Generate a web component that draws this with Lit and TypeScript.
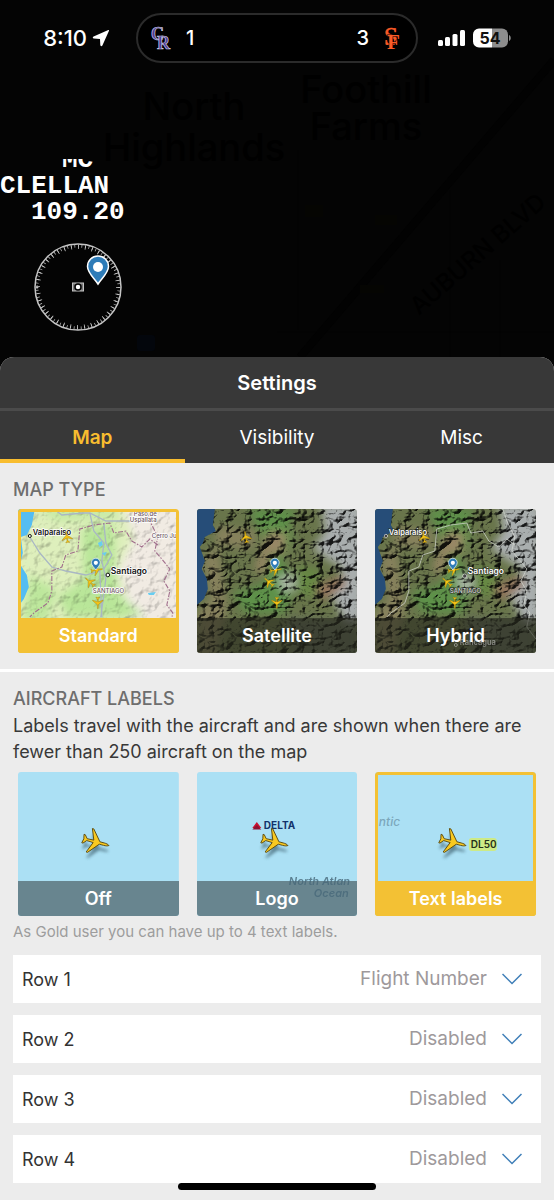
import { LitElement, html, svg, css, nothing } from "lit";
import { customElement, property, state } from "lit/decorators.js";
import { classMap } from "lit/directives/class-map.js";

const PLANE =
  "M0-14C0.900-13 1.300-11 1.300-8.500V-4L12.500 5.500V7L1.300 2.500L1 9.500L4.500 12.500V13.800L0 12.800L-4.500 13.800V12.500L-1 9.500L-1.300 2.500L-12.500 7V5.500L-1.300-4V-8.500C-1.300-11-0.900-13 0-14Z";

const plane = (x: number, y: number, heading: number, size: number) => svg`
  <path d=${PLANE} transform="translate(${x} ${y}) rotate(${heading}) scale(${size})"
    fill="#f9c920" stroke="#5a4a10" stroke-width="0.900"/>`;

const dot = (x: number, y: number, heading: number) => svg`
  <path d=${PLANE} transform="translate(${x} ${y}) rotate(${heading}) scale(0.420)"
    fill="#f7c414" stroke="#8a6c0c" stroke-width="0.800"/>`;

const pin = (x: number, y: number, size: number) => svg`
  <g transform="translate(${x} ${y}) scale(${size})">
    <path d="M0 0C-3-5-10.500-11-10.500-17.500A10.500 10.500 0 0 1 10.500-17.500C10.500-11 3-5 0 0Z"
      fill="#2e7cb8" stroke="#fff" stroke-width="1.500"/>
    <circle cx="0" cy="-17" r="5" fill="#fff"/>
  </g>`;

const traffic = svg`
  ${dot(49, 28, -10)}
  ${dot(79, 61, 80)}
  ${dot(72, 73, -48)}
  ${dot(80, 94, 180)}
  ${pin(78, 61, 0.42)}`;

const BORDER =
  "M161 130L152 118L155 104L149 96L152 82L146 72L152 60L144 50L137 42L140 28L132 12L128 0M140 36L132 30L124 38L114 32L108 22L96 24L92 14L76 16L62 20L60 42L48 46L44 58L34 62L34 82L30 94L16 104L12 108";

const standardMap = svg`
  <defs>
    <filter id="paper" x="0" y="0" width="100%" height="100%" color-interpolation-filters="sRGB">
      <feTurbulence type="fractalNoise" baseFrequency="0.110" numOctaves="3" seed="7"/>
      <feDiffuseLighting surfaceScale="1.100" diffuseConstant="1.220" lighting-color="#fff" result="l">
        <feDistantLight azimuth="225" elevation="55"/>
      </feDiffuseLighting>
      <feComposite in="l" in2="SourceGraphic" operator="arithmetic" k1="1" k2="0" k3="0" k4="0"/>
    </filter>
    <filter id="soften"><feGaussianBlur stdDeviation="4"/></filter>
  </defs>
  <g filter="url(#paper)">
    <rect width="161" height="144" fill="#deefbc"/>
    <g filter="url(#soften)">
      <path d="M104-5L116 30L100 60L112 100L108 150H170V-5Z" fill="#f1ebe3"/>
      <path d="M64 20L96 14L98 60L100 84L128 108H50L40 88L66 70Z" fill="#b9e699"/>
      <path d="M12 66L38 80L30 112H5Z" fill="#bde79c"/>
      <path d="M20 0H100V8L40 12Z" fill="#c3e9a2"/>
    </g>
  </g>
  <path d="M0 0H17L14 16L9 26L3 28L5 44L2 55L9 66L11 78L6 90L0 98Z" fill="#55bdf2"/>
  <g fill="none" stroke="#a9b7c4" stroke-width="1.300">
    <path d="M12 28L22 44L34 58L48 62L68 66L82 62L84 108M72 4L76 22L86 34L84 52L88 70L83 108M86 14L88 34L94 46L86 60M36 0L44 6L66 4L72 4L88 12L128 12"/>
  </g>
  <path d=${BORDER} fill="none" stroke="#a06e8c" stroke-width="1.100" stroke-dasharray="5 1.500 1.500 1.500"/>
  <path d="M80 34l4-2 1 4-3 2zM84 44l5-1-2 4zM130 84l8-1-2 3h-5z" fill="#69cdf0"/>
  <circle cx="12" cy="27" r="1.500" fill="#fff" stroke="#111"/>
  <circle cx="90" cy="66" r="1.800" fill="#fff" stroke="#111"/>
  <g font-weight="600" fill="#111" stroke="#fff" stroke-width="1.500" paint-order="stroke">
    <text x="15" y="26" font-size="7.500">Valparaiso</text>
    <text x="93" y="65" font-size="8.500">Santiago</text>
    <g font-weight="500" font-size="6" fill="#6b5560">
      <text x="75" y="84">SANTIAGO</text>
      <text x="116" y="7">Paso de</text>
      <text x="112" y="13">Uspallata</text>
      <text x="134" y="29">Cerro Ju</text>
    </g>
  </g>
  ${traffic}`;

const terrain = (id: string, labelled: boolean) => svg`
  <defs>
    <filter id="relief-${id}" x="0" y="0" width="100%" height="100%" color-interpolation-filters="sRGB">
      <feTurbulence type="turbulence" baseFrequency="0.055 0.080" numOctaves="5" seed="21"/>
      <feDiffuseLighting surfaceScale="8" diffuseConstant="1.550" lighting-color="#fff" result="l">
        <feDistantLight azimuth="215" elevation="52"/>
      </feDiffuseLighting>
      <feComposite in="l" in2="SourceGraphic" operator="arithmetic" k1="0.950" k2="0" k3="0.150" k4="0"/>
    </filter>
    <filter id="blend-${id}" x="-20%" y="-20%" width="140%" height="140%"><feGaussianBlur stdDeviation="4"/></filter>
    <filter id="edge-${id}"><feGaussianBlur stdDeviation="0.600"/></filter>
  </defs>
  <g filter="url(#relief-${id})">
    <rect width="161" height="144" fill="#5f6a44"/>
    <g filter="url(#blend-${id})">
      <path d="M18 18L60 22L55 40L20 36L6 50L14 90L0 105V150H18L30 100Z" fill="#7c7655"/>
      <path d="M52 0H100L92 14L96 30L84 52L100 72L88 104L48 104L36 84L66 76L76 50L66 28Z" fill="#558443"/>
      <path d="M72 22L90 24L86 46L72 44L68 66L58 60Z" fill="#8a7a5c"/>
      <path d="M100 56L124 62L118 88L98 84Z" fill="#5d7b3d"/>
      <path d="M124-5H166V112L148 112L136 90L146 60L116 40L128 22Z" fill="#9a9e9e"/>
      <path d="M118 78L146 66L150 76L126 92Z" fill="#876b54"/>
      <path d="M80 68L98 64L100 80L86 84Z" fill="#9aa694"/>
      <path d="M90 108L161 112V150H96Z" fill="#586050"/>
    </g>
  </g>
  <path d="M0 0H18L16 16L19 22L8 28L6 34L3 38L8 52L5 60L10 70L11 80L7 90L0 96Z" fill="#264e78" filter="url(#edge-${id})"/>
  ${labelled
    ? svg`
      <path d=${BORDER} fill="none" stroke="#d5d9d2" stroke-width="0.900" opacity="0.800"/>
      <g fill="#fff" font-weight="600" stroke="#2a2f26" stroke-width="1" paint-order="stroke">
        <circle cx="11" cy="27" r="1.500" fill="#444" stroke="#fff"/>
        <circle cx="90" cy="67" r="1.800" fill="#444" stroke="#fff"/>
        <text x="14" y="26" font-size="7.500">Valparaiso</text>
        <text x="93" y="65" font-size="8.500">Santiago</text>
        <text x="75" y="84" font-size="6" font-weight="500" fill="#dcdcdc">SANTIAGO</text>
      </g>`
    : nothing}
  ${traffic}`;

const ocean = (kind: string) => svg`
  <defs>
    <filter id="shade-${kind}" x="-30%" y="-30%" width="160%" height="160%"><feGaussianBlur stdDeviation="1.500"/></filter>
  </defs>
  <rect width="161" height="144" fill="#abe0f4"/>
  ${kind === "logo"
    ? svg`
      <path d="M60 50L64.500 56H55.500Z" fill="#c8102e"/>
      <path d="M60 53L64.500 57.500H55.500Z" fill="#8e1230"/>
      <text x="67" y="57" font-size="10" font-weight="700" fill="#12336b">DELTA</text>`
    : nothing}
  <path d=${PLANE} transform="translate(78 76) rotate(105) scale(0.950)" fill="#23404d" opacity="0.550" filter="url(#shade-${kind})"/>
  ${plane(78, 70, 105, 0.97)}
  ${kind === "text"
    ? svg`
      <text x="4" y="54" font-size="12" font-style="italic" font-weight="500" fill="#7ba7bb">ntic</text>
      <rect x="94" y="66" width="28" height="13" rx="3" fill="#cdea86"/>
      <text x="96" y="76" font-size="10" font-weight="600" fill="#26301a">DL50</text>`
    : nothing}`;

const overlays: Record<string, unknown> = {
  logo: svg`
    <g font-size="11" font-style="italic" font-weight="600" fill="#48697a" opacity="0.800">
      <text x="92" y="113">North Atlan</text>
      <text x="117" y="125">Ocean</text>
    </g>`,
  hybrid: svg`
    <g opacity="0.500">
      <circle cx="81" cy="136" r="1.500" fill="none" stroke="#ddd"/>
      <text x="85" y="136" font-size="7.500" font-weight="600" fill="#ddd">Rancagua</text>
    </g>`,
};

@customElement("option-card")
class OptionCard extends LitElement {
  @property() name = "";
  @property() label = "";
  @property() art = "";
  @property({ type: Boolean }) checked = false;

  static styles = css`
    :host { display: block; }
    .card {
      position: relative;
      display: grid;
      grid-template-rows: 109px 35px;
      border-radius: 3px;
      overflow: hidden;
      cursor: pointer;
    }
    .picture { grid-area: 1 / 1 / 3 / 2; display: block; width: 100%; height: 144px; }
    .radio { position: absolute; opacity: 0; margin: 0; }
    .caption {
      grid-area: 2 / 1;
      display: flex;
      align-items: center;
      justify-content: center;
      background: rgba(40, 42, 30, 0.62);
      color: #fff;
      font-size: 18px;
      line-height: 24px;
      font-weight: 600;
      z-index: 1;
    }
    .water .caption { background: #68858f; }
    .overlay { z-index: 2; pointer-events: none; }
    .on::after {
      content: "";
      grid-area: 1 / 1 / 3 / 2;
      border: 3px solid #f3c134;
      border-radius: 3px;
      z-index: 2;
      pointer-events: none;
    }
    .on .caption, .water.on .caption { background: #f3c134; }
  `;

  private drawing() {
    switch (this.art) {
      case "standard": return standardMap;
      case "satellite": return terrain("satellite", false);
      case "hybrid": return terrain("hybrid", true);
      default: return ocean(this.art);
    }
  }

  render() {
    const water = ["off", "logo", "text"].includes(this.art);
    const overlay = overlays[this.art];
    return html`
      <label class=${classMap({ card: true, water, on: this.checked })}>
        <input class="radio" type="radio" name=${this.name} .checked=${this.checked}
          @change=${() => this.dispatchEvent(new CustomEvent("pick", { detail: this.label }))} />
        <svg class="picture" viewBox="0 0 161 144" preserveAspectRatio="xMidYMid slice" aria-hidden="true">${this.drawing()}</svg>
        <span class="caption">${this.label}</span>
        ${overlay
          ? html`<svg class="picture overlay" viewBox="0 0 161 144" preserveAspectRatio="xMidYMid slice" aria-hidden="true">${overlay}</svg>`
          : nothing}
      </label>`;
  }
}

@customElement("phone-status")
class PhoneStatus extends LitElement {
  static styles = css`
    :host { display: grid; grid-template-columns: 1fr 282px 1fr; align-items: center; color: #fff; }
    .left { display: flex; justify-content: flex-end; align-items: center; gap: 5px; padding-right: 26px; }
    .right { display: flex; align-items: center; gap: 8px; padding-left: 20px; }
    .time { font-size: 22px; line-height: 26px; font-weight: 500; }
    .island {
      display: flex;
      align-items: center;
      height: 50px;
      box-sizing: border-box;
      padding: 0 13px;
      gap: 12px;
      border: 2px solid #2b2b2b;
      border-radius: 25px;
      background: #000;
      font-size: 20px;
      font-weight: 500;
    }
    .away { margin-right: auto; }
    .icon { display: block; flex: none; overflow: visible; }
    .serif { font-family: "Liberation Serif", serif; }
  `;

  render() {
    return html`
      <div class="left">
        <span class="time">8:10</span>
        <svg class="icon" width="18" height="18" viewBox="0 0 18 18"><path d="M16.300 1L1.600 7.500C.4 8.100.6 9.500 1.900 9.600L8 9.900L8.300 16C8.400 17.400 9.900 17.600 10.400 16.400L17 1.700C17.200 1.100 16.900.8 16.300 1Z" fill="#fff"/></svg>
      </div>
      <div class="island">
        <svg class="icon serif" width="23" height="26" viewBox="0 0 23 26" font-weight="700" fill="#4d3a94" stroke="#cfcde4" stroke-width="0.700" aria-label="Colorado">
          <text x="0" y="15" font-size="18">C</text>
          <text x="6" y="24" font-size="18">R</text>
        </svg>
        <span class="away">1</span>
        <span>3</span>
        <svg class="icon serif" width="22" height="26" viewBox="0 0 22 26" fill="#fb5b27" aria-label="San Francisco">
          <text x="3" y="20" font-size="25" stroke="#fb5b27" stroke-width="0.600">S</text>
          <text x="6" y="24" font-size="21" font-weight="700" stroke="#000" stroke-width="1.200" paint-order="stroke">F</text>
        </svg>
      </div>
      <div class="right">
        <svg class="icon" width="27" height="18" viewBox="0 0 27 18" fill="#fff">
          <rect x="0" y="11" width="5" height="6" rx="1.500"/><rect x="7" y="8" width="5" height="9" rx="1.500"/>
          <rect x="14.500" y="5" width="5" height="12" rx="1.500"/><rect x="22" y="1" width="5" height="16" rx="1.500"/>
        </svg>
        <svg class="icon" width="38" height="20" viewBox="0 0 38 20">
          <path d="M6 .5H19V19.500H6A6 6 0 0 1 0 13.500V6.500A6 6 0 0 1 6 .5Z" fill="#fff"/>
          <path d="M19 .5H29A6 6 0 0 1 35 6.500V13.500A6 6 0 0 1 29 19.500H19Z" fill="#8d8d8d"/>
          <path d="M36 7C38.300 8 38.300 12 36 13Z" fill="#8d8d8d"/>
          <text x="17" y="16" text-anchor="middle" font-size="16" font-weight="700" fill="#111">54</text>
        </svg>
      </div>`;
  }
}

@customElement("app-root")
class AppRoot extends LitElement {
  @state() private tab = "Map";
  @state() private mapType = "Standard";
  @state() private labelType = "Text labels";

  static styles = css`
    :host {
      display: flex;
      flex-direction: column;
      min-height: 100vh;
      background: #040404;
      font-family: Inter, "Liberation Sans", sans-serif;
    }
    .hero { display: grid; grid-template: 357px / 1fr; }
    .backdrop { grid-area: 1 / 1; display: block; width: 100%; height: 369px; }
    .status { grid-area: 1 / 1; align-self: start; padding-top: 13px; z-index: 1; }
    .beacon { font-family: "Liberation Mono", monospace; font-size: 26px; font-weight: 700; fill: #fff; }
    .sheet {
      flex: 1;
      display: flex;
      flex-direction: column;
      border-radius: 14px 14px 0 0;
      overflow: hidden;
      background: #ececec;
      z-index: 1;
    }
    .title {
      margin: 0;
      padding: 13px 0 11px;
      border-bottom: 3px solid #4b4b4b;
      background: #383838;
      color: #fff;
      text-align: center;
      font-size: 20px;
      line-height: 27px;
      font-weight: 600;
    }
    .tabs { display: grid; grid-template-columns: repeat(3, 1fr); background: #383838; }
    .tab {
      height: 52px;
      padding: 5px 0 0;
      border: 0;
      border-bottom: 4px solid transparent;
      background: none;
      color: #fff;
      font: 400 19px/24px Inter, "Liberation Sans", sans-serif;
    }
    .tab.current { color: #f8bd2f; border-color: #f8bd2f; font-weight: 600; }
    .section { padding: 14px 13px 16px; }
    .section + .section { border-top: 3px solid #fff; padding-bottom: 17px; }
    .heading { margin: 0; color: #6e6e6e; font-size: 18px; line-height: 25px; font-weight: 500; }
    .about { margin: 2px 0 0; color: #383838; font-size: 18px; line-height: 26px; }
    .cards { display: grid; grid-template-columns: repeat(3, 1fr); gap: 18px; padding: 7px 5px 0; }
    .note { margin: 6px 0 13px; color: #9d9d9d; font-size: 15px; line-height: 20px; }
    .rows { display: grid; gap: 12px; }
    .row { display: grid; grid-template: 48px / auto 1fr 39px; align-items: center; background: #fff; }
    .name { grid-area: 1 / 1; padding-left: 9px; font-size: 18px; color: #333; }
    .select {
      grid-area: 1 / 2 / 2 / 4;
      align-self: stretch;
      appearance: none;
      border: 0;
      padding: 0 54px 0 0;
      background: none;
      color: #9e999b;
      font: 400 19px/24px Inter, "Liberation Sans", sans-serif;
      text-align: right;
      text-align-last: right;
    }
    .chevron { grid-area: 1 / 3; width: 20px; height: 12px; pointer-events: none; }
    .home {
      position: absolute;
      left: 50%;
      bottom: 10px;
      width: 198px;
      height: 7px;
      border-radius: 4px;
      background: #000;
      transform: translateX(-50%);
      z-index: 2;
    }
    .frame { position: relative; flex: 1; display: flex; flex-direction: column; }
  `;

  private backdrop() {
    return html`
      <svg class="backdrop" aria-hidden="true">
        <defs><clipPath id="below"><rect x="0" y="159" width="160" height="80"/></clipPath></defs>
        <g fill="none" stroke="#020202">
          <path d="M300 357L554 60" stroke-width="8"/>
          <path d="M450 190V357M500 260V357M277 332H554M298 150V330" stroke-width="1"/>
        </g>
        <g fill="#050502"><path d="M375 215h22v10h-22zM305 205h18v12h-18zM360 285h24v8h-24z"/></g>
        <rect x="137" y="335" width="18" height="16" rx="3" fill="#03060c"/>
        <g fill="#000" font-size="38" font-weight="500" text-anchor="middle">
          <text x="194" y="120">North</text>
          <text x="194" y="161">Highlands</text>
          <text x="366" y="103">Foothill</text>
          <text x="366" y="140">Farms</text>
          <text x="478" y="262" font-size="24" transform="rotate(-41 478 254)">AUBURN BLVD</text>
        </g>
        <g class="beacon" clip-path="url(#below)">
          <text x="62" y="167">MC</text>
          <text x="0" y="193">CLELLAN</text>
          <text x="31" y="219">109.20</text>
        </g>
        <g fill="none" stroke="#c4c4c4">
          <circle cx="78" cy="287" r="43" stroke-width="1.500"/>
          <circle cx="78" cy="287" r="40" stroke-width="4" pathLength="360" stroke-dasharray="1.200 8.800"/>
          <circle cx="78" cy="287" r="41" stroke-width="3" pathLength="360" stroke-dasharray="1 4"/>
          <rect x="72.500" y="283" width="11" height="8" fill="#777"/>
          <circle cx="78" cy="287" r="3" fill="#fff" stroke="#000" stroke-width="1.500"/>
        </g>
        ${pin(98, 284, 1)}
      </svg>`;
  }

  private card(name: string, label: string, art: string, picked: string, pick: (v: string) => void) {
    return html`<option-card name=${name} label=${label} art=${art} ?checked=${label === picked}
      @pick=${(e: CustomEvent) => pick(e.detail)}></option-card>`;
  }

  render() {
    const type = (v: string) => { this.mapType = v; };
    const kind = (v: string) => { this.labelType = v; };
    return html`
      <div class="frame">
        <header class="hero">
          ${this.backdrop()}
          <phone-status class="status"></phone-status>
        </header>
        <main class="sheet">
          <h1 class="title">Settings</h1>
          <div class="tabs" role="tablist">
            ${["Map", "Visibility", "Misc"].map((t) => html`
              <button class=${classMap({ tab: true, current: t === this.tab })} role="tab"
                aria-selected=${t === this.tab} @click=${() => { this.tab = t; }}>${t}</button>`)}
          </div>
          <section class="section">
            <h2 class="heading">MAP TYPE</h2>
            <div class="cards">
              ${this.card("map", "Standard", "standard", this.mapType, type)}
              ${this.card("map", "Satellite", "satellite", this.mapType, type)}
              ${this.card("map", "Hybrid", "hybrid", this.mapType, type)}
            </div>
          </section>
          <section class="section">
            <h2 class="heading">AIRCRAFT LABELS</h2>
            <p class="about">Labels travel with the aircraft and are shown when there are fewer than 250 aircraft on the map</p>
            <div class="cards">
              ${this.card("labels", "Off", "off", this.labelType, kind)}
              ${this.card("labels", "Logo", "logo", this.labelType, kind)}
              ${this.card("labels", "Text labels", "text", this.labelType, kind)}
            </div>
            <p class="note">As Gold user you can have up to 4 text labels.</p>
            <div class="rows">
              ${["Flight Number", "Disabled", "Disabled", "Disabled"].map((value, i) => html`
                <div class="row">
                  <label class="name" for="row-${i}">Row ${i + 1}</label>
                  <select class="select" id="row-${i}"><option>${value}</option></select>
                  <svg class="chevron" viewBox="0 0 20 12" aria-hidden="true"><path d="M.5 1L10 10.500L19.500 1" fill="none" stroke="#3f7fb8" stroke-width="1.500"/></svg>
                </div>`)}
            </div>
          </section>
        </main>
        <div class="home"></div>
      </div>`;
  }
}
